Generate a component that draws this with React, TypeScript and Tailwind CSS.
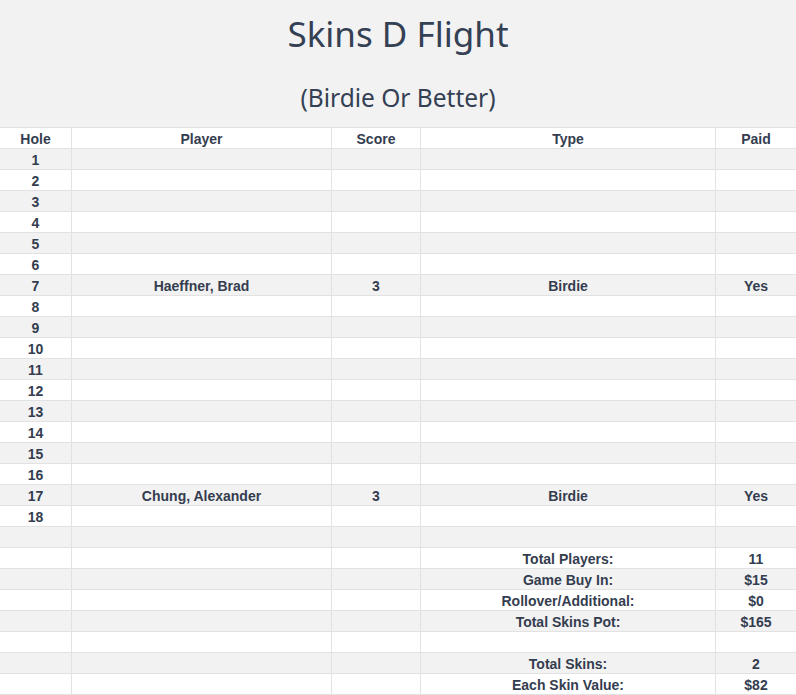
const holes = Array.from({ length: 18 }, (_, i) => i + 1);

type Row = { hole?: string; player?: string; score?: string; type?: string; paid?: string };

const skins: Record<number, Row> = {
  7: { player: "Haeffner, Brad", score: "3", type: "Birdie", paid: "Yes" },
  17: { player: "Chung, Alexander", score: "3", type: "Birdie", paid: "Yes" },
};

const summary: Row[] = [
  {},
  { type: "Total Players:", paid: "11" },
  { type: "Game Buy In:", paid: "$15" },
  { type: "Rollover/Additional:", paid: "$0" },
  { type: "Total Skins Pot:", paid: "$165" },
  {},
  { type: "Total Skins:", paid: "2" },
  { type: "Each Skin Value:", paid: "$82" },
];

const rows: Row[] = [
  ...holes.map((h) => ({ hole: String(h), ...(skins[h] || {}) })),
  ...summary,
];

const cell = "flex items-center justify-center border-r border-[#e2e2e2] h-full pt-[1px]";

const TableRow = ({ row, gray }: { row: Row; gray: boolean }) => (
  <div
    className={`grid grid-cols-[72px_260px_89px_295px_1fr] h-[21px] border-b border-[#e2e2e2] ${
      gray ? "bg-[#f2f2f2]" : "bg-white"
    }`}
  >
    <div className={cell}>{row.hole}</div>
    <div className={cell}>{row.player}</div>
    <div className={cell}>{row.score}</div>
    <div className={cell}>{row.type}</div>
    <div className="flex items-center justify-center h-full pt-[1px]">{row.paid}</div>
  </div>
);

export default function App() {
  return (
    <div className="w-[796px] h-[695px] overflow-hidden bg-white text-[#343d4f]">
      <div
        className="h-[128px] bg-[#f2f2f2] border-b border-[#e2e2e2] flex flex-col items-center"
        style={{ fontFamily: '"Noto Sans", "Open Sans", sans-serif' }}
      >
        <h1 className="text-[35px] leading-[40px] mt-[14px] text-[#344054]">Skins D Flight</h1>
        <h2 className="text-[24.5px] leading-[30px] mt-[29px] text-[#344054]">(Birdie Or Better)</h2>
      </div>
      <div
        className="text-[14px] font-bold"
        style={{ fontFamily: '"Liberation Sans", Arial, sans-serif' }}
      >
        <TableRow row={{ hole: "Hole", player: "Player", score: "Score", type: "Type", paid: "Paid" }} gray={false} />
        {rows.map((r, i) => (
          <TableRow key={i} row={r} gray={i % 2 === 0} />
        ))}
      </div>
    </div>
  );
}
